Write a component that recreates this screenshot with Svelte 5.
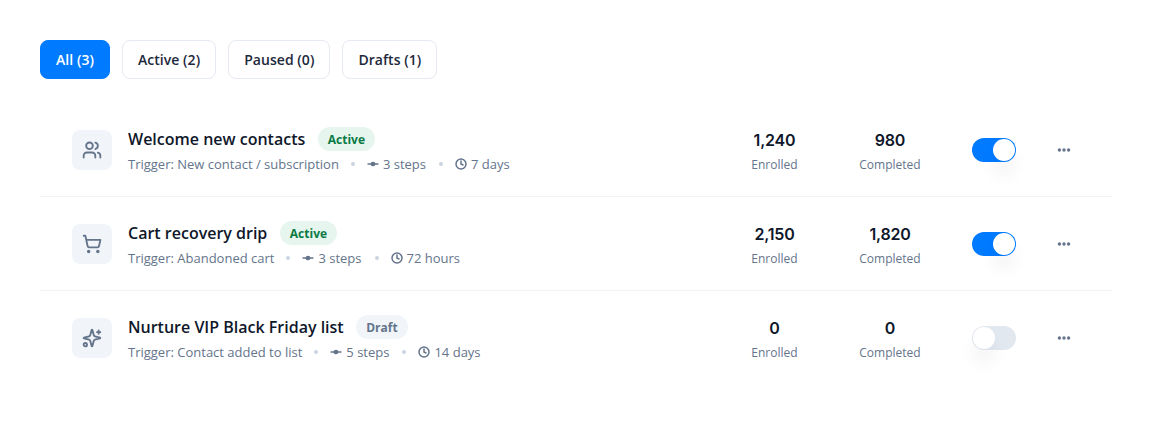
<script>
  const filters = [
    { label: 'All (3)', active: true },
    { label: 'Active (2)' },
    { label: 'Paused (0)' },
    { label: 'Drafts (1)' }
  ];
  const rows = [
    { icon: 'users', title: 'Welcome new contacts', badge: 'Active', trigger: 'Trigger: New contact / subscription', steps: '3 steps', time: '7 days', enrolled: '1,240', completed: '980', on: true },
    { icon: 'cart', title: 'Cart recovery drip', badge: 'Active', trigger: 'Trigger: Abandoned cart', steps: '3 steps', time: '72 hours', enrolled: '2,150', completed: '1,820', on: true },
    { icon: 'spark', title: 'Nurture VIP Black Friday list', badge: 'Draft', trigger: 'Trigger: Contact added to list', steps: '5 steps', time: '14 days', enrolled: '0', completed: '0', on: false }
  ];
</script>

<main class="page">
  <div class="filters">
    {#each filters as f}
      <button class="filter" class:active={f.active}>{f.label}</button>
    {/each}
  </div>

  <div class="list">
    {#each rows as r}
      <div class="row">
        <div class="icon">
          <svg width="20" height="20" viewBox="0 0 24 24" fill="none" stroke="currentColor" stroke-width="2.2" stroke-linecap="round" stroke-linejoin="round">
            {#if r.icon === 'users'}
              <path d="M16 21v-2a4 4 0 0 0-4-4H6a4 4 0 0 0-4 4v2" />
              <circle cx="9" cy="7" r="4" />
              <path d="M22 21v-2a4 4 0 0 0-3-3.87" />
              <path d="M16 3.13a4 4 0 0 1 0 7.75" />
            {:else if r.icon === 'cart'}
              <circle cx="8" cy="21" r="1" />
              <circle cx="19" cy="21" r="1" />
              <path d="M2.05 2.05h2l2.66 12.42a2 2 0 0 0 2 1.58h9.78a2 2 0 0 0 1.95-1.57l1.65-7.43H5.12" />
            {:else}
              <path d="M9.94 15.5A2 2 0 0 0 8.5 14.06l-6.14-1.58a.5.5 0 0 1 0-.96L8.5 9.94A2 2 0 0 0 9.94 8.5l1.58-6.14a.5.5 0 0 1 .96 0L14.06 8.5a2 2 0 0 0 1.44 1.44l6.14 1.58a.5.5 0 0 1 0 .96L15.5 14.06a2 2 0 0 0-1.44 1.44l-1.58 6.14a.5.5 0 0 1-.96 0z" />
              <path d="M20 3v4" />
              <path d="M22 5h-4" />
              <circle cx="4" cy="20" r="2" />
            {/if}
          </svg>
        </div>

        <div class="info">
          <div class="head">
            <span class="title">{r.title}</span>
            <span class="badge" class:draft={r.badge === 'Draft'}>{r.badge}</span>
          </div>
          <div class="meta">
            <span>{r.trigger}</span>
            <i class="dot"></i>
            <span class="item">
              <svg class="mi" width="12" height="12" viewBox="0 0 24 24" fill="none" stroke="currentColor" stroke-width="2.6" stroke-linecap="round">
                <circle cx="12" cy="12" r="3.4" fill="currentColor" />
                <path d="M2 12h7M15 12h7" />
              </svg>
              {r.steps}
            </span>
            <i class="dot"></i>
            <span class="item">
              <svg class="mi" width="12" height="12" viewBox="0 0 24 24" fill="none" stroke="currentColor" stroke-width="3" stroke-linecap="round" stroke-linejoin="round">
                <circle cx="12" cy="12" r="10" />
                <path d="M12 6v6l4 2" />
              </svg>
              {r.time}
            </span>
          </div>
        </div>

        <div class="stat s1">
          <div class="num">{r.enrolled}</div>
          <div class="cap">Enrolled</div>
        </div>
        <div class="stat s2">
          <div class="num">{r.completed}</div>
          <div class="cap">Completed</div>
        </div>

        <div class="toggle" class:on={r.on}><span class="knob"></span></div>

        <div class="more">
          <svg width="16" height="16" viewBox="0 0 16 16" fill="currentColor">
            <circle cx="3.4" cy="8" r="1.7" />
            <circle cx="8" cy="8" r="1.7" />
            <circle cx="12.6" cy="8" r="1.7" />
          </svg>
        </div>
      </div>
    {/each}
  </div>
</main>

<style>
  :global(body) {
    margin: 0;
    background: #fff;
    font-family: "Open Sans", "Noto Sans", sans-serif;
  }
  .page {
    padding: 40px;
  }
  .filters {
    display: flex;
    gap: 12px;
    margin-bottom: 24px;
  }
  .filter {
    height: 39px;
    padding: 0 15px;
    border: 1px solid #e5e9f0;
    border-radius: 8px;
    background: #fff;
    color: #1e293b;
    font: 600 14px "Open Sans", sans-serif;
    letter-spacing: 0.05px;
  }
  .filter.active {
    background: #007aff;
    border-color: #007aff;
    color: #fff;
  }
  .row {
    display: flex;
    align-items: center;
    height: 93px;
    padding: 0 40px 0 32px;
    border-bottom: 1px solid #f1f3f6;
  }
  .row:last-child {
    border-bottom: 0;
  }
  .icon {
    width: 40px;
    height: 40px;
    flex: none;
    display: flex;
    align-items: center;
    justify-content: center;
    border-radius: 8px;
    background: #f1f5f9;
    color: #64748b;
    margin-right: 16px;
  }
  .info {
    flex: 1;
    min-width: 0;
  }
  .head {
    display: flex;
    align-items: center;
    gap: 12.5px;
    height: 24px;
    margin-top: 1px;
  }
  .title {
    font-size: 16px;
    font-weight: 600;
    color: #0f172a;
  }
  .badge {
    height: 24px;
    padding: 0 10px;
    border-radius: 12px;
    background: #e6f6ee;
    color: #0a7a45;
    font-size: 12px;
    font-weight: 700;
    line-height: 25px;
  }
  .badge.draft {
    background: #f1f5f9;
    color: #64748b;
  }
  .meta {
    display: flex;
    align-items: center;
    gap: 12px;
    margin-top: 3px;
    font-size: 13px;
    line-height: 20px;
    color: #64748b;
  }
  .item {
    display: flex;
    align-items: center;
    gap: 4px;
    margin-right: 1px;
  }
  .dot {
    width: 4px;
    height: 4px;
    border-radius: 50%;
    background: #cbd5e1;
  }
  .stat {
    text-align: center;
    padding-top: 2px;
  }
  .s1 {
    width: 115px;
    margin-right: 1px;
  }
  .s2 {
    width: 114px;
  }
  .num {
    font-family: Inter, sans-serif;
    font-size: 16px;
    font-weight: 600;
    letter-spacing: -0.2px;
    line-height: 24px;
    margin-top: 1px;
    color: #0f172a;
  }
  .cap {
    margin-top: 4px;
    font-size: 12px;
    line-height: 18px;
    color: #64748b;
  }
  .toggle {
    width: 44px;
    height: 24px;
    margin-left: 25px;
    padding: 1px;
    box-sizing: border-box;
    display: flex;
    border-radius: 12px;
    background: #e2e8f0;
  }
  .toggle.on {
    background: #007aff;
    justify-content: flex-end;
  }
  .knob {
    width: 22px;
    height: 22px;
    border-radius: 50%;
    background: #fff;
    box-shadow: 0 14px 16px 2px rgba(0, 0, 0, 0.04);
  }
  .more {
    margin-left: 40px;
    width: 16px;
    height: 16px;
    color: #64748b;
  }
  .more svg {
    display: block;
  }
</style>
